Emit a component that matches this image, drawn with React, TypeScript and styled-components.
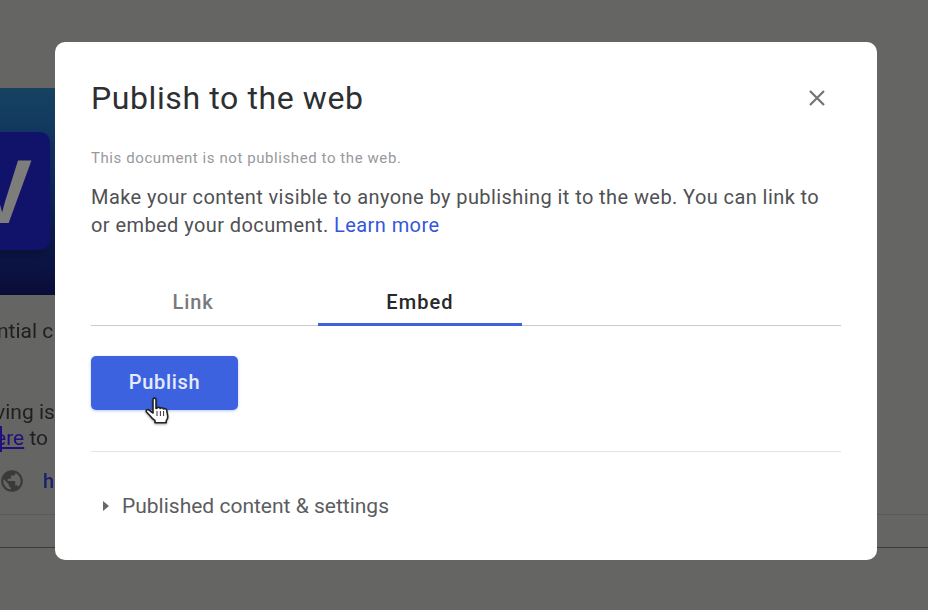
import React from "react";
import styled, { createGlobalStyle } from "styled-components";

const GlobalStyle = createGlobalStyle`
  html, body {
    margin: 0;
    padding: 0;
    width: 928px;
    height: 610px;
    overflow: hidden;
    background: #656563;
    font-family: Roboto, "Liberation Sans", sans-serif;
  }
`;

// the document page, dimmed behind the dialog
const Page = styled.div`
  width: 928px;
  height: 610px;
  padding-top: 88px;
  box-sizing: border-box;
  overflow: hidden;
  background: #656563;
  color: #1f1f22;
  filter: blur(0.5px);
`;

const Hero = styled.div`
  position: relative;
  width: 55px;
  height: 207px;
  overflow: hidden;
  background: linear-gradient(180deg, #15435f 0%, #102a63 45%, #0a0c38 100%);
`;

const HeroTile = styled.div`
  position: absolute;
  left: -20px;
  top: 44px;
  width: 70px;
  height: 118px;
  border-radius: 10px;
  background: #11136a;
  box-shadow: 0 6px 10px rgba(0, 0, 0, 0.25);
`;

const HeroLetter = styled.span`
  position: absolute;
  left: -28px;
  top: 59px;
  font: 700 90px/90px "Liberation Sans", sans-serif;
  color: #7d7d7c;
`;

const PageText = styled.div<{ $top: number }>`
  margin-top: ${(p) => p.$top}px;
  font-size: 21px;
  line-height: 26px;
  white-space: nowrap;
`;

const Cut = styled.span<{ $shift: number }>`
  display: inline-block;
  margin-left: ${(p) => p.$shift}px;
`;

const PageLink = styled.span`
  position: relative;
  color: #20107c;
  text-decoration: underline;
`;

const TextCaret = styled.i`
  position: absolute;
  left: 5px;
  top: 0;
  width: 2px;
  height: 26px;
  background: #20107c;
`;

const LinkRow = styled.div`
  display: flex;
  align-items: center;
  gap: 18px;
  margin-top: 17px;
  margin-left: -1px;
  font-size: 20px;
  font-weight: 500;
  color: #1b1e6b;
`;

const PageRule = styled.div<{ $top: number; $color: string }>`
  margin-top: ${(p) => p.$top}px;
  height: 1px;
  background: ${(p) => p.$color};
`;

const Dialog = styled.div`
  position: absolute;
  left: 55px;
  top: 42px;
  width: 822px;
  height: 518px;
  box-sizing: border-box;
  padding: 36px 36px 0;
  border-radius: 10px;
  background: #fff;
  color: #4f5154;
`;

const Header = styled.div`
  display: flex;
  justify-content: space-between;
  align-items: center;
  height: 40px;
`;

const Title = styled.h1`
  margin: 0;
  font-size: 32px;
  font-weight: 400;
  line-height: 40px;
  letter-spacing: 0.6px;
  color: #2d2f31;
`;

const CloseButton = styled.button`
  display: flex;
  padding: 0;
  margin-right: 15px;
  border: 0;
  background: none;
  color: #717477;
`;

const Status = styled.p`
  margin: 30px 0 0;
  font-size: 15px;
  line-height: 20px;
  letter-spacing: 0.58px;
  color: #97999c;
`;

const Description = styled.p`
  margin: 15px 0 0;
  width: 740px;
  font-size: 20px;
  line-height: 28px;
  letter-spacing: 0.42px;
`;

const LearnMore = styled.a`
  color: #3556d8;
  text-decoration: none;
`;

const Tabs = styled.div`
  display: flex;
  margin-top: 40px;
  height: 47px;
  border-bottom: 1px solid #c9cacc;
  box-sizing: border-box;
`;

const Tab = styled.div<{ $active?: boolean; $width: number; $gap: number }>`
  display: flex;
  justify-content: center;
  box-sizing: border-box;
  width: ${(p) => p.$width}px;
  margin-left: ${(p) => p.$gap}px;
  height: 47px;
  padding-top: 11px;
  font-size: 20px;
  line-height: 24px;
  font-weight: 500;
  letter-spacing: ${(p) => (p.$active ? "1.1px" : "0.9px")};
  color: ${(p) => (p.$active ? "#27282a" : "#77797c")};
  border-bottom: ${(p) => (p.$active ? "3px solid #3d62e0" : "0")};
`;

const PublishButton = styled.button`
  position: relative;
  display: block;
  width: 147px;
  height: 54px;
  margin-top: 30px;
  padding: 0 0 2px;
  border: 0;
  border-radius: 5px;
  background: #3d62e0;
  color: #e6ebfb;
  font-family: inherit;
  font-size: 20px;
  font-weight: 500;
  letter-spacing: 0.7px;
  box-shadow: 0 1px 3px rgba(61, 98, 224, 0.35);
`;

const Cursor = styled.svg`
  position: absolute;
  left: 54px;
  top: 41px;
  filter: drop-shadow(0 1px 1px rgba(0, 0, 0, 0.35));
`;

const Divider = styled.div`
  margin-top: 41px;
  height: 1px;
  background: #e2e3e5;
`;

const Disclosure = styled.div`
  display: flex;
  align-items: center;
  gap: 13px;
  margin-top: 40px;
  padding-left: 12px;
  font-size: 21px;
  line-height: 28px;
  color: #5b5d60;
`;

const Caret = styled.span`
  width: 0;
  height: 0;
  border-left: 6px solid #66686b;
  border-top: 5px solid transparent;
  border-bottom: 5px solid transparent;
`;

export default function App() {
  return (
    <>
      <GlobalStyle />
      <Page>
        <Hero>
          <HeroTile />
          <HeroLetter>V</HeroLetter>
        </Hero>
        <PageText $top={23}>
          <Cut $shift={-3}>ntial c</Cut>
        </PageText>
        <PageText $top={55}>
          <Cut $shift={-5}>ving is</Cut>
        </PageText>
        <PageText $top={0}>
          <Cut $shift={-5}>
            <PageLink>
              ere
              <TextCaret />
            </PageLink>{" "}
            to
          </Cut>
        </PageText>
        <LinkRow>
          <svg width="26" height="26" viewBox="0 0 24 24" fill="#3a3a3b">
            <path d="M12 2C6.48 2 2 6.48 2 12s4.48 10 10 10 10-4.48 10-10S17.52 2 12 2zm-1 17.93c-3.95-.49-7-3.85-7-7.93 0-.62.08-1.21.21-1.79L9 15v1c0 1.1.9 2 2 2v1.93zm6.9-2.54c-.26-.81-1-1.39-1.9-1.39h-1v-3c0-.55-.45-1-1-1H8v-2h2c.55 0 1-.45 1-1V7h2c1.1 0 2-.9 2-2v-.41c2.93 1.19 5 4.06 5 7.41 0 2.08-.8 3.97-2.1 5.39z" />
          </svg>
          <span>h</span>
        </LinkRow>
        <PageRule $top={20} $color="#5a5a59" />
        <PageRule $top={32} $color="#3c3c3c" />
      </Page>
      <Dialog>
        <Header>
          <Title>Publish to the web</Title>
          <CloseButton aria-label="Close">
            <svg width="18" height="18" viewBox="0 0 18 18" fill="none" stroke="currentColor" strokeWidth="2.2">
              <path d="M2 2l14 14M16 2L2 16" />
            </svg>
          </CloseButton>
        </Header>
        <Status>This document is not published to the web.</Status>
        <Description>
          Make your content visible to anyone by publishing it to the web. You can link to or embed your document.{" "}
          <LearnMore>Learn more</LearnMore>
        </Description>
        <Tabs>
          <Tab $width={204} $gap={0}>Link</Tab>
          <Tab $active $width={204} $gap={23}>Embed</Tab>
        </Tabs>
        <PublishButton>
          Publish
          <Cursor width="26" height="27" viewBox="0 0 26 27">
            <path
              d="M8 2.5c0-1.8 3-1.8 3 0v9l1-.3c.5-1.2 2.7-1.2 3.2.2.8-1 2.8-.8 3.2.6.9-.8 3-.3 3.3 1.2l1 6c.2 2-.5 3.5-1.5 4.5v2H10v-2.2c-2-1-3.5-2.8-5-4.8L1.5 15c-1-1.5 1-3.2 2.5-2L8 16z"
              fill="#fff"
              stroke="#222"
              strokeWidth="1.6"
              strokeLinejoin="round"
            />
            <path d="M12 14v5M15.4 14v5M18.6 14v5" stroke="#333" strokeWidth="1" />
          </Cursor>
        </PublishButton>
        <Divider />
        <Disclosure>
          <Caret />
          <span>Published content &amp; settings</span>
        </Disclosure>
      </Dialog>
    </>
  );
}
